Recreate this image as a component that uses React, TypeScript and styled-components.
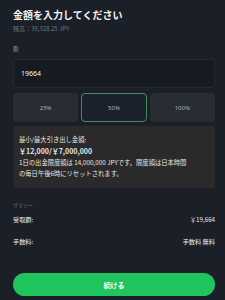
import React, { useState } from "react";
import styled, { createGlobalStyle } from "styled-components";

const GlobalStyle = createGlobalStyle`
  html, body {
    margin: 0;
    padding: 0;
    background: #1a1f28;
  }
  body {
    font-family: "Noto Sans CJK JP", "Noto Sans", sans-serif;
    -webkit-font-smoothing: antialiased;
  }
`;

const Panel = styled.div`
  width: 225px;
  height: 300px;
  box-sizing: border-box;
  padding: 8px 10px 0 13px;
  display: flex;
  flex-direction: column;
  color: #e6e8eb;
`;

const Title = styled.h1`
  margin: 0;
  font-size: 10px;
  line-height: 13px;
  font-weight: 700;
  color: #f2f3f5;
`;

const Balance = styled.div`
  margin-top: 3px;
  font-size: 6px;
  line-height: 9px;
  color: #6f7681;
`;

const Label = styled.div`
  margin-top: 12px;
  font-size: 5.5px;
  line-height: 8px;
  color: #8b929c;
`;

const AmountInput = styled.input`
  margin-top: 6px;
  height: 29px;
  box-sizing: border-box;
  width: 100%;
  background: #161b22;
  border: 1px solid #242a33;
  border-radius: 3px;
  padding: 0 7px;
  color: #f2f3f5;
  font-family: "Noto Sans", sans-serif;
  font-size: 7px;
  outline: none;
`;

const Percents = styled.div`
  margin-top: 5px;
  display: grid;
  grid-template-columns: repeat(3, 1fr);
  gap: 3px;
`;

const PercentButton = styled.button<{ $active?: boolean }>`
  height: 29px;
  border-radius: 4px;
  border: 1px solid ${(p) => (p.$active ? "#3f8f5c" : "transparent")};
  background: ${(p) => (p.$active ? "#1a212a" : "#282d34")};
  color: #a9aeb5;
  font-family: "Noto Sans", sans-serif;
  font-size: 6px;
  padding: 0;
`;

const InfoBox = styled.div`
  margin-top: 4px;
  background: #2a2a2a;
  border-radius: 3px;
  padding: 8px 6px 9px;
  font-size: 6.3px;
  line-height: 11px;
  color: #e4e4e4;
`;

const Strong = styled.div`
  font-weight: 700;
  font-size: 7px;
  line-height: 12px;
`;

const SummaryLabel = styled.div`
  margin-top: 13px;
  font-size: 5px;
  line-height: 8px;
  color: #6f7681;
`;

const Row = styled.div<{ $gap: number }>`
  display: flex;
  justify-content: space-between;
  font-size: 6.2px;
  line-height: 10px;
  color: #e6e8eb;
  margin-top: ${(p) => p.$gap}px;
`;

const Continue = styled.button`
  margin-top: auto;
  margin-bottom: 4px;
  height: 23px;
  border: none;
  border-radius: 12px;
  background: #1fc55c;
  color: #ffffff;
  font-family: "Noto Sans CJK JP", sans-serif;
  font-size: 7px;
  font-weight: 700;
`;

export default function App() {
  const [pct, setPct] = useState("50%");
  return (
    <>
      <GlobalStyle />
      <Panel>
        <Title>金額を入力してください</Title>
        <Balance>残高：39,328.25 JPY</Balance>
        <Label>額</Label>
        <AmountInput defaultValue="19664" />
        <Percents>
          {["25%", "50%", "100%"].map((p) => (
            <PercentButton key={p} $active={p === pct} onClick={() => setPct(p)}>
              {p}
            </PercentButton>
          ))}
        </Percents>
        <InfoBox>
          <div>最小/最大引き出し金額:</div>
          <Strong>￥12,000/￥7,000,000</Strong>
          <div>1日の出金限度額は 14,000,000 JPYです。限度額は日本時間</div>
          <div>の毎日午後6時にリセットされます。</div>
        </InfoBox>
        <SummaryLabel>サマリー</SummaryLabel>
        <Row $gap={6}>
          <span>受取額:</span>
          <span>￥19,664</span>
        </Row>
        <Row $gap={12}>
          <span>手数料:</span>
          <span>手数料 無料</span>
        </Row>
        <Continue>続ける</Continue>
      </Panel>
    </>
  );
}
